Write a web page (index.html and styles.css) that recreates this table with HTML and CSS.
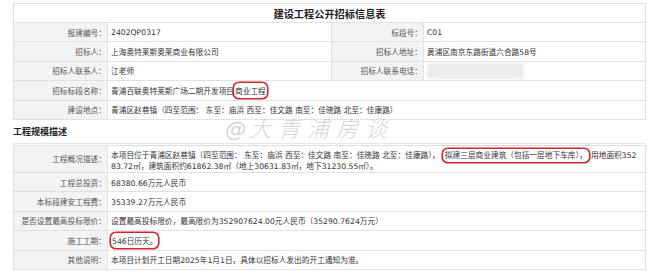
FILE: index.html
```html
<!DOCTYPE html>
<html lang="zh-CN">
<head>
<meta charset="utf-8">
<title>建设工程公开招标信息表</title>
<link rel="stylesheet" href="styles.css">
</head>
<body>
<div class="page">
  <div class="sheet">
    <div class="row title">建设工程公开招标信息表</div>
    <div class="row quad">
      <div class="lab">报建编号：</div><div class="val">2402QP0317</div>
      <div class="lab lab2">标段号：</div><div class="val">C01</div>
    </div>
    <div class="row quad">
      <div class="lab">招标人：</div><div class="val">上海奥特莱斯奥莱商业有限公司</div>
      <div class="lab lab2">招标人地址：</div><div class="val">黄浦区南京东路街道六合路58号</div>
    </div>
    <div class="row quad">
      <div class="lab">招标人联系人：</div><div class="val">江老师</div>
      <div class="lab lab2">招标人联系电话：</div><div class="val"><span class="blurred"></span></div>
    </div>
    <div class="row pair">
      <div class="lab">招标标段名称：</div><div class="val">青浦百联奥特莱斯广场二期开发项目<span class="mark">商业工程</span></div>
    </div>
    <div class="row pair">
      <div class="lab">建设地点：</div><div class="val">青浦区赵巷镇（四至范围： 东至：庙浜 西至：佳文路 南至：佳晓路 北至：佳康路）</div>
    </div>
  </div>

  <h2 class="section">工程规模描述</h2>

  <div class="sheet">
    <div class="row pair tall">
      <div class="lab">工程概况描述：</div><div class="val wrap">本项目位于青浦区赵巷镇（四至范围： 东至：庙浜 西至：佳文路 南至：佳晓路 北至：佳康路），<span class="mark wide">拟建三层商业建筑（包括一层地下车库），</span>用地面积35283.72㎡，建筑面积约61862.38㎡（地上30631.83㎡，地下31230.55㎡）。</div>
    </div>
    <div class="row pair">
      <div class="lab">工程总投资：</div><div class="val">68380.66万元人民币</div>
    </div>
    <div class="row pair">
      <div class="lab">本标段建安工程费：</div><div class="val">35339.27万元人民币</div>
    </div>
    <div class="row pair">
      <div class="lab">是否设置最高投标限价：</div><div class="val">设置最高投标限价，最高限价为352907624.00元人民币（35290.7624万元）</div>
    </div>
    <div class="row pair">
      <div class="lab">施工工期：</div><div class="val"><span class="mark">546日历天。</span></div>
    </div>
    <div class="row pair">
      <div class="lab">其他说明：</div><div class="val">本项目计划开工日期2025年1月1日，具体以招标人发出的开工通知为准。</div>
    </div>
  </div>

  <div class="watermark"><span class="at">@</span>大青浦房谈</div>
</div>
</body>
</html>
```

FILE: styles.css
```css
html, body {
  margin: 0;
  padding: 0;
  background: #fff;
}

.page {
  position: relative;
  width: 633px;
  padding: 3px 14px 0 13px;
  font-family: "DejaVu Sans", "Noto Sans CJK SC", sans-serif;
  font-size: 7.7px;
  color: #333;
}

.sheet {
  border: 1px solid #dedede;
  border-bottom: none;
}

.row {
  box-sizing: border-box;
  height: 19.4px;
  border-bottom: 1px solid #e2e2e2;
  display: grid;
}

.title {
  height: 19px;
  display: flex;
  align-items: center;
  justify-content: center;
  font-family: "Noto Sans CJK SC", sans-serif;
  font-weight: bold;
  font-size: 10.2px;
  color: #222;
}

.quad {
  grid-template-columns: 94px 223px 93px 1fr;
}

.pair {
  grid-template-columns: 94px 1fr;
}

.lab {
  display: flex;
  align-items: center;
  justify-content: flex-end;
  padding-right: 1px;
  background: #f3f3f3;
  border-right: 1px solid #e2e2e2;
  color: #555;
  white-space: nowrap;
}

.lab2 {
  border-left: 1px solid #e2e2e2;
}

.val {
  display: flex;
  align-items: center;
  padding-left: 3px;
  white-space: nowrap;
}

.tall {
  height: 27px;
}

.val.wrap {
  display: block;
  white-space: normal;
  word-break: break-all;
  line-height: 11px;
  padding-top: 4px;
  padding-right: 8px;
}

.mark {
  border-radius: 5px;
  box-shadow: 0 0 0 1.6px #d3262c;
  padding: 2px 1px;
}

.mark.wide {
  margin: 0 2px 0 3px;
  padding: 2px 2px;
}

.blurred {
  display: inline-block;
  width: 97px;
  height: 16px;
  border-radius: 4px;
  background: #ececec;
  filter: blur(1px);
}

.section {
  margin: 0;
  height: 24px;
  box-sizing: border-box;
  border-bottom: 1px solid #e6e6e6;
  margin-bottom: 1px;
  display: flex;
  align-items: center;
  padding-top: 1px;
  font-family: "Noto Sans CJK SC", sans-serif;
  font-size: 9px;
  font-weight: bold;
  color: #222;
}

.watermark {
  position: absolute;
  left: 225px;
  top: 111px;
  font-family: "Noto Sans CJK SC", sans-serif;
  font-weight: 300;
  font-style: italic;
  font-size: 22px;
  letter-spacing: 7px;
  color: rgba(150, 150, 150, 0.42);
  white-space: nowrap;
  pointer-events: none;
}

.watermark .at {
  font-family: "DejaVu Sans", sans-serif;
  font-size: 21px;
  letter-spacing: 3px;
}
```
